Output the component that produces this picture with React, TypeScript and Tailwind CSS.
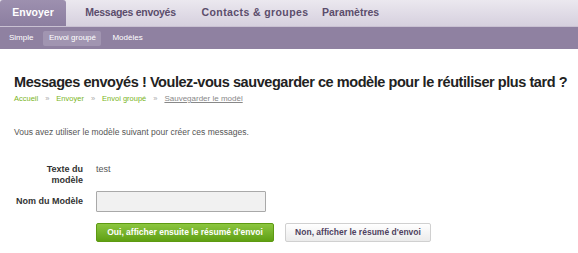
export default function App() {
  const font = { fontFamily: '"Liberation Sans", Arial, sans-serif' };
  return (
    <div className="w-[578px] h-[253px] bg-white overflow-hidden" style={font}>
      <div className="h-[27px] bg-gradient-to-b from-[#ebe8ef] to-[#d6d0de] flex items-end border-b border-[#c9c1d2]">
        <div className="h-[26px] w-[66px] bg-gradient-to-b from-[#9d90af] to-[#8c7ea0] rounded-t-[3px] text-white font-bold text-[10.5px] flex items-center justify-center">Envoyer</div>
        <div className="h-[26px] flex items-center text-[10.5px] font-bold text-[#5b4d6c] whitespace-nowrap">
          <span className="ml-[19px] w-[91px] text-center tracking-[-0.3px]">Messages envoyés</span>
          <span className="ml-[25px] w-[108px] text-center tracking-[0.4px]">Contacts &amp; groupes</span>
          <span className="ml-[13px]">Paramètres</span>
        </div>
      </div>
      <div className="h-[22px] bg-[#8f81a1] flex items-center text-[8px] text-white whitespace-nowrap">
        <span className="ml-[9px]">Simple</span>
        <span className="ml-[10px] h-[15px] w-[58px] flex items-center justify-center bg-[#a195b1] rounded-[2px]">Envoi groupé</span>
        <span className="ml-[11px]">Modèles</span>
      </div>
      <div className="pl-[14px]">
        <h1 className="mt-[23px] text-[14.5px] font-bold text-[#222] tracking-[-0.44px] leading-[20px] whitespace-nowrap">
          Messages envoyés ! Voulez-vous sauvegarder ce modèle pour le réutiliser plus tard ?
        </h1>
        <div className="mt-[2px] text-[7.5px] leading-[10px] flex items-center text-[#7ab51d] whitespace-nowrap">
          <span>Accueil</span>
          <span className="mx-[7px] text-[#aaa]">»</span>
          <span>Envoyer</span>
          <span className="mx-[7px] text-[#aaa]">»</span>
          <span>Envoi groupé</span>
          <span className="mx-[7px] text-[#aaa]">»</span>
          <span className="text-[#888] underline text-[8px]">Sauvegarder le modèl</span>
        </div>
        <p className="mt-[23px] text-[8.5px] text-[#555] leading-[11px]">Vous avez utiliser le modèle suivant pour créer ces messages.</p>
        <div className="mt-[26px] grid grid-cols-[69px_auto] gap-x-[13px] text-[9px] items-start">
          <div className="text-right font-bold text-[#333] leading-[11px]">Texte du<br />modèle</div>
          <div className="text-[#555] leading-[11px]">test</div>
          <div className="text-right font-bold text-[#333] mt-[5px] h-[21px] flex items-center justify-end">Nom du Modèle</div>
          <div className="mt-[5px]">
            <div className="w-[170px] h-[21px] border border-[#a9a9a9] bg-[#f1f1f1] rounded-[1px]" />
          </div>
        </div>
        <div className="ml-[82px] mt-[11px] flex gap-[11px]">
          <button className="h-[19px] w-[178px] rounded-[2px] bg-gradient-to-b from-[#8cc63f] to-[#5fa011] text-white font-bold text-[8.5px] border border-[#5d9a12] whitespace-nowrap">Oui, afficher ensuite le résumé d'envoi</button>
          <button className="h-[19px] w-[146px] rounded-[2px] bg-gradient-to-b from-[#ffffff] to-[#ebebeb] text-[#4f425f] font-bold text-[8.5px] border border-[#d0d0d0] whitespace-nowrap">Non, afficher le résumé d'envoi</button>
        </div>
      </div>
    </div>
  );
}
